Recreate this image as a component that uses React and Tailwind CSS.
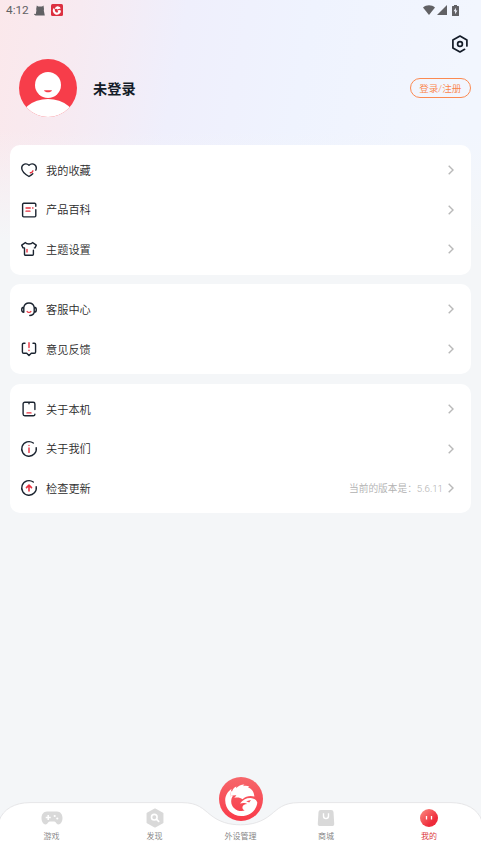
const INK = '#1b2430'
const RED = '#e8303f'

function Glyph({ children }) {
  return (
    <svg viewBox="0 0 18 18" className="h-[18px] w-[18px] shrink-0 fill-none stroke-[1.4]" strokeLinecap="round" strokeLinejoin="round">
      {children}
    </svg>
  )
}

function HeartIcon() {
  return (
    <Glyph>
      <path stroke={INK} d="M12.8 12.8C11.7 13.8 10.4 14.7 9 15.5C5.4 13.4 1.7 10.4 1.7 7C1.7 2.8 6.6 1.8 9 4.3C11.4 1.8 16.3 2.8 16.3 7c0 .8-.2 1.5-.5 2.2" />
      <path stroke={RED} d="m10.4 11.8 1.500-.4 1-1.600" />
    </Glyph>
  )
}

function BookIcon() {
  return (
    <Glyph>
      <path stroke={INK} d="M15.8 5.2V3.4a1.1 1.1 0 0 0-1.1-1.1H3.7a1.1 1.1 0 0 0-1.1 1.1v11.400a1.1 1.1 0 0 0 1.1 1.1h11a1.1 1.1 0 0 0 1.1-1.1V8.6" />
      <path stroke={RED} strokeWidth="1.300" d="M6 7h4.300M12.600 7h.4M6 10.200h4" />
    </Glyph>
  )
}

function ShirtIcon() {
  return (
    <Glyph>
      <path stroke={INK} d="M13.400 10.300V14.200a1 1 0 0 1-1 1H5.500a1 1 0 0 1-1-1V7.900H3L1.700 5.100 5.400 2.600C6.600 4.500 11.400 4.500 12.600 2.600L16.300 5.100 15 7.900H14.400" />
      <path stroke={RED} d="M7 9.400v2.600" />
    </Glyph>
  )
}

function ServiceIcon() {
  return (
    <Glyph>
      <path stroke={INK} d="M3.8 7.3a5.3 5.3 0 0 1 10.400 0M3.8 7.3v5C2.400 12.300 1.700 11.200 1.700 9.800S2.400 7.300 3.800 7.300ZM14.200 7.300v5c1.400 0 2.100-1.100 2.100-2.500s-.7-2.500-2.100-2.500ZM14.200 12.300C13.700 14.200 12 15.500 9.800 15.500" />
      <path stroke={RED} d="M7.200 11.600c.9 1 2.700 1 3.600 0" />
    </Glyph>
  )
}

function FeedbackIcon() {
  return (
    <Glyph>
      <path stroke={INK} d="M5 3.200H3.700a1.300 1.300 0 0 0-1.300 1.300v7.500a1.300 1.300 0 0 0 1.300 1.300h3L9 15.600l2.300-2.300h3a1.300 1.300 0 0 0 1.300-1.300V4.500a1.300 1.300 0 0 0-1.300-1.300H13" />
      <path stroke={RED} d="M9 2.700v4.900M9 10.200v.3" />
    </Glyph>
  )
}

function PhoneIcon() {
  return (
    <Glyph>
      <path stroke={INK} d="M14.900 9.600V3.900a1.700 1.700 0 0 0-1.700-1.700H4.800a1.700 1.700 0 0 0-1.700 1.700v10.200a1.700 1.700 0 0 0 1.700 1.700h8.400c.9 0 1.700-.7 1.700-1.600M9 2.400v1.300" />
      <path stroke={RED} d="M7 12.900h4" />
    </Glyph>
  )
}

function InfoIcon() {
  return (
    <Glyph>
      <path stroke={INK} d="M13.300 3A7.300 7.300 0 1 0 16.200 7.600" />
      <path stroke={RED} d="M9 5.400v.1M9 8v4.400" />
    </Glyph>
  )
}

function UpdateIcon() {
  return (
    <Glyph>
      <path stroke={INK} d="M13.300 3A7.300 7.300 0 1 0 16.200 7.600" />
      <path stroke={RED} strokeWidth="1.600" d="M9 12V6.400M6.500 8.600 9 6.100l2.500 2.500" />
    </Glyph>
  )
}

function SettingsIcon() {
  return (
    <svg viewBox="0 0 18 18" className="h-[18px] w-[18px] fill-none stroke-[#141c28] stroke-[1.7]" strokeLinecap="round" strokeLinejoin="round">
      <path d="M15.900 11V5.100L9 1.100 1.900 5.100v7.800L9 16.900l4.600-2.600" />
      <circle cx="9" cy="9" r="2.400" />
    </svg>
  )
}

function ChevronIcon() {
  return (
    <svg viewBox="0 0 6 10" className="h-[10px] w-[6px] fill-none stroke-[#b9b9b9] stroke-[1.4]">
      <path d="m.7.7 4.300 4.300L.7 9.300" />
    </svg>
  )
}

function Avatar() {
  return (
    <svg viewBox="0 0 58 58" className="h-[58px] w-[58px]">
      <clipPath id="avatarClip">
        <circle cx="29" cy="29" r="29" />
      </clipPath>
      <g clipPath="url(#avatarClip)">
        <rect width="58" height="58" fill="#f73d4a" />
        <ellipse cx="29" cy="64" rx="29" ry="24" fill="#fff" />
        <circle cx="29" cy="26" r="13" fill="#fff" />
        <path d="M25 31.200h8c-1 2.800-7 2.800-8 0Z" fill="#f73d4a" />
      </g>
    </svg>
  )
}

function CatIcon() {
  return (
    <svg viewBox="0 0 11 11" className="h-[11px] w-[11px] fill-[#616164]">
      <path d="M2.800.5 4.200 1.600h3.900L9.500.5 10 4l-.2 1.600 1 4.900H1.500L0 9.600l.4-.9 1.400.4.6-3.500L2.200 4Z" />
    </svg>
  )
}

function AppBadge() {
  return (
    <svg viewBox="0 0 12 12" className="h-3 w-3">
      <rect width="12" height="12" rx="1.500" fill="#dc3040" />
      <path d="M2.800 3.900A4.100 4.100 0 1 0 10 6.700C8.700 5.700 7.200 6 6.200 7.100L7.200 7.300 6.700 8.600C4.900 8.600 3.600 7.200 3.800 5.600Z" fill="#fff" />
      <path d="M3.700 5 5.300 2.100v.8L7.400 1.800l-.3.8 1.900.4.6 1.900C8.300 4.500 7.300 4.900 6.300 5.500L5.400 4.800Z" fill="#fff" />
    </svg>
  )
}

function StatusIcons() {
  return (
    <div className="flex items-center">
      <svg viewBox="0 0 12 10" className="h-[10px] w-3 fill-[#616164]">
        <path d="M6 10 0 2.500C3.300-.6 8.700-.6 12 2.500Z" />
      </svg>
      <svg viewBox="0 0 10 10" className="ml-[2px] h-[10px] w-[10px] fill-[#616164]">
        <path d="M10 0v10H0Z" />
      </svg>
      <svg viewBox="0 0 7 11" className="ml-[5px] h-[11px] w-[7px]">
        <path d="M2 0h3v1h1.400q.6 0 .6.6v8.800q0 .6-.6.6H.6q-.6 0-.6-.6V1.600Q0 1 .6 1H2Z" fill="#616164" />
        <path d="M3.900 2.800 1.600 6.300h1.500v2.900L5.400 5.600H3.900Z" fill="#f1f3fc" />
      </svg>
    </div>
  )
}

function GamepadIcon() {
  return (
    <svg viewBox="0 0 22 14" className="h-[14px] w-[22px]">
      <path d="M6 .4h10c3.300 0 5.500 2.800 5.500 6.700 0 3.500-1.700 6.400-4.200 6.400-2 0-2.200-3-4-3H8.700c-1.800 0-2 3-4 3C2.200 13.500.5 10.600.5 7.100.5 3.200 2.700.4 6 .4Z" fill="#d9d9d9" />
      <path d="M7.200 4v5M4.700 6.500h5" stroke="#fff" strokeWidth="1.500" />
      <circle cx="13.700" cy="5" r="1.100" fill="#fff" />
      <circle cx="16.300" cy="7.500" r="1.100" fill="#fff" />
    </svg>
  )
}

function DiscoverIcon() {
  return (
    <svg viewBox="0 0 18 20" className="h-5 w-[18px]">
      <path d="m9 1.300 7.600 4.300v8.800L9 18.700l-7.600-4.300V5.600Z" fill="#d9d9d9" stroke="#d9d9d9" strokeWidth="1.700" strokeLinejoin="round" />
      <circle cx="8.300" cy="9.200" r="2.800" fill="none" stroke="#fff" strokeWidth="1.600" />
      <path d="m10.300 11.200 2.400 2.200" stroke="#fff" strokeWidth="1.700" strokeLinecap="round" />
    </svg>
  )
}

function ShopIcon() {
  return (
    <svg viewBox="0 0 18 18" className="h-[18px] w-[18px]">
      <path d="M3.800.9h10.400a2.300 2.300 0 0 1 2.300 2.100l.7 11.400a2.500 2.500 0 0 1-2.500 2.700H3.300A2.500 2.500 0 0 1 .8 14.400L1.500 3A2.300 2.300 0 0 1 3.800.9Z" fill="#d9d9d9" />
      <path d="M6.500 4.200v2.900a2.500 2.500 0 0 0 5 0V4.200" fill="none" stroke="#fff" strokeWidth="1.400" />
    </svg>
  )
}

function MineIcon() {
  return (
    <svg viewBox="0 0 18 18" className="h-[18px] w-[18px]">
      <linearGradient id="mineFill" x1="0" y1="0" x2="1" y2="1">
        <stop offset="0.100" stopColor="#fb8079" />
        <stop offset="0.700" stopColor="#ee2b3a" />
      </linearGradient>
      <circle cx="9" cy="9" r="9" fill="url(#mineFill)" />
      <path d="M6.500 6.900v3.600M11.500 6.900v3.600" stroke="#fff" strokeWidth="1.300" />
    </svg>
  )
}

function BrandLogo() {
  return (
    <svg viewBox="0 0 44 44" className="h-11 w-11">
      <linearGradient id="brandFill" x1="0" y1="0" x2="0" y2="1">
        <stop offset="0" stopColor="#f6676b" />
        <stop offset="1" stopColor="#f93a49" />
      </linearGradient>
      <circle cx="22" cy="22" r="22" fill="url(#brandFill)" />
      <path
        d="M12.500 12C8.500 14.700 6.200 18.800 6.200 23.300 6.200 32.200 13.300 39 22.200 39 31 39 37.900 32.700 38.300 25.600 37.500 22.800 34.800 20.900 31.200 20.900 27 20.900 23.500 22.800 21 26.600 24 25.500 26.700 25.800 28.400 27.100 25.300 27.200 23.500 28.500 23.400 30.400 23.400 31.700 24.300 32.800 25.800 33.600 18.800 35.600 12.200 30.800 12.200 24.400 12.200 22.200 12.800 20.200 14.100 18.400L11 19.200Z"
        fill="#fff"
      />
      <path
        d="M11 19.300 12 13.900 13 14.600C13.600 12 15.100 10.300 17.400 9.400L17 11.200C19.300 8.900 22 7.700 25.400 7.500L24 9.200C26.600 8.500 28.500 8.700 30.400 9.700L29 10.500C32.900 11.700 35.100 15 35.400 19.600 31.500 18.200 27 19 23.500 22.200 21.200 20.400 18.300 20.100 15.200 20.900L17.400 18.300C15 18.200 13 18.500 11 19.300Z"
        fill="#fff"
      />
      <path d="m27.200 24.300 4.800-1.200-1.800 2.500Z" fill="#f74a55" />
    </svg>
  )
}

const menuGroups = [
  [
    { label: '我的收藏', Icon: HeartIcon },
    { label: '产品百科', Icon: BookIcon },
    { label: '主题设置', Icon: ShirtIcon },
  ],
  [
    { label: '客服中心', Icon: ServiceIcon },
    { label: '意见反馈', Icon: FeedbackIcon },
  ],
  [
    { label: '关于本机', Icon: PhoneIcon },
    { label: '关于我们', Icon: InfoIcon },
    { label: '检查更新', Icon: UpdateIcon, note: '当前的版本是：5.6.11' },
  ],
]

function MenuCard({ items }) {
  return (
    <section className="rounded-[10px] bg-white py-[5.4px]">
      {items.map(({ label, Icon, note }) => (
        <div key={label} className="flex h-[39.6px] items-center pr-[17px] pl-[10px]">
          <Icon />
          <span className="ml-2 pt-[3.400px] text-[11.2px] leading-4 font-[350] text-[#2a2a2a]">{label}</span>
          {note && <span className="ml-auto pt-[2.400px] text-[9.7px] leading-4 font-[350] text-[#b0b0b0]">{note}</span>}
          <span className={note ? 'ml-[5px]' : 'ml-auto'}>
            <ChevronIcon />
          </span>
        </div>
      ))}
    </section>
  )
}

function TabItem({ label, active, children }) {
  return (
    <div className="flex flex-col items-center">
      <div className="flex h-5 items-center pt-px">{children}</div>
      <span className={active ? 'mt-1 text-[8px] leading-3 font-[350] text-[#d91f2c]' : 'mt-1 text-[8px] leading-3 font-[350] text-[#808080]'}>
        {label}
      </span>
    </div>
  )
}

function TabBar() {
  return (
    <nav className="relative h-[53px]">
      <svg viewBox="0 0 481 53" className="absolute inset-0 h-[53px] w-[481px] overflow-visible">
        <path
          d="M-1 19C3 7 15 .6 30 .6H182C198 .6 203 7 210 12.500C219 20 229 22.800 240.500 22.800S262 20 271 12.500C278 7 283 .6 299 .6H451C466 .6 478 7 482 19V54H-1Z"
          fill="#fff"
          stroke="#e6e6e8"
          strokeWidth="1"
        />
      </svg>
      <div className="relative grid grid-cols-[103px_103px_69px_102px_104px] pt-[5px]">
        <TabItem label="游戏"><GamepadIcon /></TabItem>
        <TabItem label="发现"><DiscoverIcon /></TabItem>
        <div className="-mt-[30px] flex flex-col items-center">
          <BrandLogo />
          <span className="mt-[10px] text-[8px] leading-3 font-[350] whitespace-nowrap text-[#808080]">外设管理</span>
        </div>
        <TabItem label="商城"><ShopIcon /></TabItem>
        <TabItem label="我的" active><MineIcon /></TabItem>
      </div>
    </nav>
  )
}

export default function App() {
  return (
    <div className="flex h-[855px] w-[481px] flex-col overflow-hidden bg-[#f4f6f8] bg-[linear-gradient(180deg,transparent_0px,transparent_130px,#f4f6f8_240px),linear-gradient(100deg,#fbe8eb_0px,#f7eaf1_80px,#efeffc_185px,#eff3fe_310px,#f2f6fe_470px)] font-['Roboto','Noto_Sans_CJK_SC',sans-serif]">
      <header className="h-[145px] shrink-0">
        <div className="flex h-5 items-center justify-between pr-[22px] pl-[6px]">
          <div className="flex items-center">
            <span className="w-[28px] text-[11.8px] leading-4 text-[#616164]">4:12</span>
            <CatIcon />
            <span className="ml-[6px]"><AppBadge /></span>
          </div>
          <StatusIcons />
        </div>
        <div className="flex justify-end pt-[15px] pr-[12.500px]">
          <SettingsIcon />
        </div>
        <div className="mt-[6px] flex h-[58px] items-center pr-[10px] pl-[19px]">
          <Avatar />
          <h1 className="ml-4 pt-px text-[14.2px] leading-5 font-bold text-[#141c28]">未登录</h1>
          <button className="ml-auto h-[20px] w-[61.500px] rounded-full border border-[#fb8a52] pt-px text-[9.6px] leading-4 font-[350] text-[#fb8448]">
            登录/注册
          </button>
        </div>
      </header>
      <main className="flex flex-1 flex-col gap-[9.600px] px-[10px]">
        {menuGroups.map((items) => (
          <MenuCard key={items[0].label} items={items} />
        ))}
      </main>
      <TabBar />
    </div>
  )
}
